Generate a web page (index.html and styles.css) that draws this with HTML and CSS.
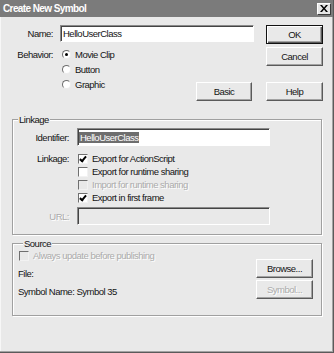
FILE: index.html
```html
<!DOCTYPE html>
<html lang="en">
<head>
  <meta charset="UTF-8" />
  <title>Create New Symbol</title>
  <link rel="stylesheet" href="styles.css">
</head>
<body>
  <div class="dialog">
    <div class="titlebar">
      <span class="title">Create New Symbol</span>
      <span class="close">
        <svg width="8" height="7" viewBox="0 0 8 7"><path d="M0 0h2l2 2.4L6 0h2L5 3.5 8 7H6L4 4.6 2 7H0l3-3.5z" fill="#000"/></svg>
      </span>
    </div>

    <div class="content">
      <div class="top">
        <div class="main">
          <div class="name-row">
            <span class="lbl">Name:</span>
            <span class="field">HelloUserClass</span>
          </div>
          <div class="behavior-row">
            <span class="lbl">Behavior:</span>
            <div class="radios">
              <div class="opt"><span class="radio on"></span>Movie Clip</div>
              <div class="opt"><span class="radio"></span>Button</div>
              <div class="opt"><span class="radio"></span>Graphic</div>
            </div>
            <button class="btn basic">Basic</button>
          </div>
        </div>
        <div class="side">
          <button class="btn default">OK</button>
          <button class="btn">Cancel</button>
          <button class="btn help">Help</button>
        </div>
      </div>

      <fieldset class="group linkage">
        <legend>Linkage</legend>
        <div class="frow id-row">
          <span class="flbl">Identifier:</span>
          <span class="field wide"><span class="sel">HelloUserClass</span></span>
        </div>
        <div class="frow link-row">
          <span class="flbl">Linkage:</span>
          <div class="checks">
            <div class="opt"><span class="check on"></span>Export for ActionScript</div>
            <div class="opt"><span class="check"></span>Export for runtime sharing</div>
            <div class="opt off"><span class="check"></span>Import for runtime sharing</div>
            <div class="opt"><span class="check on"></span>Export in first frame</div>
          </div>
        </div>
        <div class="frow url-row">
          <span class="flbl off">URL:</span>
          <span class="field wide disabled"></span>
        </div>
      </fieldset>

      <fieldset class="group source">
        <legend>Source</legend>
        <div class="src-info">
          <div class="opt off"><span class="check"></span>Always update before publishing</div>
          <div class="src-line">File:</div>
          <div class="src-line">Symbol Name: Symbol 35</div>
        </div>
        <div class="src-buttons">
          <button class="btn">Browse...</button>
          <button class="btn" disabled>Symbol...</button>
        </div>
      </fieldset>
    </div>
  </div>
</body>
</html>
```

FILE: styles.css
```css
:root {
  --face: #e9e9e9;
  --shadow: #5a5a5a;
  --mid: #a3a3a3;
  --text: #141414;
  --muted: #ababab;
}
* {
  box-sizing: border-box;
}
body {
  margin: 0;
  background: var(--face);
  font-family: "Liberation Sans", Arial, sans-serif;
  font-size: 9.5px;
  letter-spacing: -0.5px;
  color: var(--text);
}
.dialog {
  width: 334px;
  height: 353px;
  background: var(--face);
  border-right: 1px solid var(--shadow);
  border-bottom: 1px solid var(--shadow);
  box-shadow: inset -1px -1px 0 var(--mid), inset 1px 1px 0 #f7f7f7;
}
.titlebar {
  height: 17px;
  background: #7b7b7b;
  color: #fff;
  font-size: 10px;
  font-weight: bold;
  letter-spacing: -0.6px;
  display: flex;
  align-items: center;
  justify-content: space-between;
  padding: 0 2px 0 3px;
}
.close {
  width: 14px;
  height: 12px;
  background: #e6e6e6;
  border: 1px solid;
  border-color: #fff #3c3c3c #3c3c3c #fff;
  display: flex;
  align-items: center;
  justify-content: center;
}
.content {
  padding: 8px 10px 0 0;
}

/* top part */
.top {
  display: flex;
  justify-content: space-between;
}
.main {
  width: 254px;
}
.name-row {
  display: flex;
  align-items: center;
  height: 17px;
}
.lbl {
  width: 60px;
  padding-right: 7px;
  text-align: right;
  line-height: 15px;
}
.field {
  width: 194px;
  height: 17px;
  background: #fff;
  border: 1px solid;
  border-color: #8a8a8a #fff #fff #8a8a8a;
  box-shadow: inset 1px 1px 0 #444;
  padding: 0 2px;
  display: flex;
  align-items: center;
  white-space: nowrap;
}
.behavior-row {
  display: flex;
  margin-top: 5px;
  height: 54px;
}
.radios {
  display: flex;
  flex-direction: column;
}
.opt {
  display: flex;
  align-items: center;
  gap: 4px;
  height: 15px;
  white-space: nowrap;
}
.radio {
  position: relative;
  width: 9px;
  height: 9px;
  margin-left: 2px;
  border-radius: 50%;
  background: #fff;
  border: 1px solid;
  border-color: #6f6f6f #ececec #ececec #6f6f6f;
}
.radio.on::after {
  content: "";
  position: absolute;
  left: 2px;
  top: 2px;
  width: 3px;
  height: 3px;
  border-radius: 50%;
  background: #000;
}

/* buttons */
.btn {
  width: 57px;
  height: 19px;
  padding: 0;
  font: inherit;
  letter-spacing: inherit;
  color: var(--text);
  background: var(--face);
  border: 1px solid;
  border-color: #fff var(--shadow) var(--shadow) #fff;
  box-shadow: inset -1px -1px 0 var(--mid);
}
.btn:disabled {
  color: var(--muted);
  text-shadow: 1px 1px 0 #fff;
}
.btn.default {
  border-color: #111;
  box-shadow: inset 1px 1px 0 #fff, inset -1px -1px 0 var(--shadow), inset -2px -2px 0 var(--mid);
}
.basic {
  width: 56px;
  margin-left: auto;
  margin-right: 2px;
  align-self: flex-end;
}
.side {
  display: flex;
  flex-direction: column;
  gap: 3px;
}
.side .help {
  margin-top: 13px;
}

/* group boxes */
.group {
  width: 310px;
  min-width: 0;
  margin: 0 0 0 12px;
  padding: 0;
  border: 1px solid #a0a0a0;
  box-shadow: inset 1px 1px 0 #fff, 1px 1px 0 #fff;
}
.group legend {
  margin-left: 5px;
  padding: 0 1px;
  line-height: 11px;
  background: var(--face);
}
.linkage {
  margin-top: 13px;
  padding: 3px 0 9px;
}
.frow {
  display: flex;
  align-items: center;
}
.flbl {
  width: 64px;
  padding-right: 8px;
  text-align: right;
  line-height: 13px;
}
.field.wide {
  width: 193px;
  height: 18px;
  padding: 0 1px;
}
.sel {
  background: #6e6e6e;
  color: #fff;
  padding: 0 1px;
  line-height: 11px;
}
.link-row {
  align-items: flex-start;
  margin-top: 6px;
}
.checks .opt,
.src-info .opt {
  height: 13px;
}
.check {
  position: relative;
  width: 10px;
  height: 10px;
  margin-left: 1px;
  background: #fff;
  border: 1px solid;
  border-color: #6f6f6f #f2f2f2 #f2f2f2 #6f6f6f;
}
.check.on::after {
  content: "";
  position: absolute;
  left: 2px;
  top: 0;
  width: 2px;
  height: 5px;
  border: solid #000;
  border-width: 0 2px 2px 0;
  transform: rotate(40deg);
}
.off {
  color: var(--muted);
  text-shadow: 1px 1px 0 #fff;
}
.off .check {
  background: var(--face);
}
.url-row {
  margin-top: 3px;
}
.field.disabled {
  background: var(--face);
}

/* source */
.source {
  margin-top: 3px;
  padding: 0 8px 16px 5px;
  display: flex;
  justify-content: space-between;
}
.src-info .check {
  margin-left: 1px;
}
.src-line {
  line-height: 13px;
  margin-top: 5px;
}
.src-buttons {
  display: flex;
  flex-direction: column;
  gap: 2px;
  margin-top: 10px;
}
```
